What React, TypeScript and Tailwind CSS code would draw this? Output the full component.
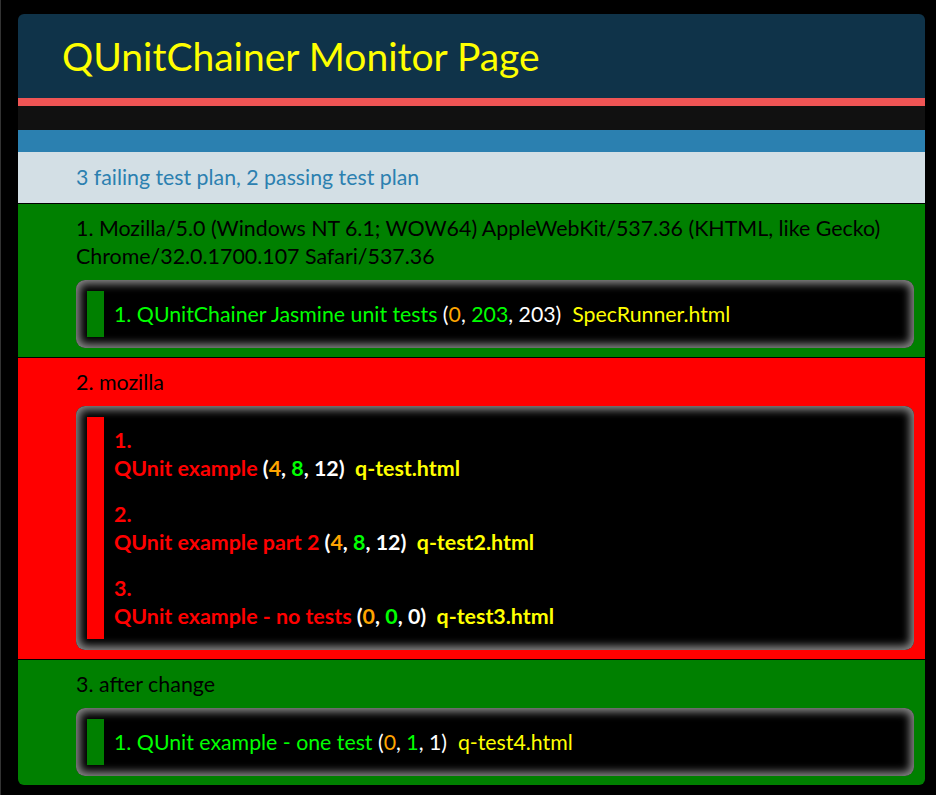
import React from "react";

type Test = { name: string; failed: number; passed: number; total: number; file: string };
type Plan = { title: React.ReactNode; pass: boolean; tests: Test[]; last?: boolean };

const plans: Plan[] = [
  {
    title: (
      <>
        1. Mozilla/5.0 (Windows NT 6.1; WOW64) AppleWebKit/537.36 (KHTML, like Gecko)
        <br />
        Chrome/32.0.1700.107 Safari/537.36
      </>
    ),
    pass: true,
    tests: [{ name: "QUnitChainer Jasmine unit tests", failed: 0, passed: 203, total: 203, file: "SpecRunner.html" }],
  },
  {
    title: "2. mozilla",
    pass: false,
    tests: [
      { name: "QUnit example", failed: 4, passed: 8, total: 12, file: "q-test.html" },
      { name: "QUnit example part 2", failed: 4, passed: 8, total: 12, file: "q-test2.html" },
      { name: "QUnit example - no tests", failed: 0, passed: 0, total: 0, file: "q-test3.html" },
    ],
  },
  {
    title: "3. after change",
    pass: true,
    last: true,
    tests: [{ name: "QUnit example - one test", failed: 0, passed: 1, total: 1, file: "q-test4.html" }],
  },
];

function Counts({ t }: { t: Test }) {
  return (
    <>
      <span className="text-white"> (</span>
      <span className="text-[#ffa500]">{t.failed}</span>
      <span className="text-white">, </span>
      <span className="text-[#00ff00]">{t.passed}</span>
      <span className="text-white">, {t.total})</span>
      <span className="text-[#ffff00] whitespace-pre">{"  " + t.file}</span>
    </>
  );
}

function PlanSection({ p }: { p: Plan }) {
  return (
    <div
      className={`border-t border-black pl-[58px] pr-[11px] pt-[10px] pb-[9px] ${
        p.pass ? "bg-[#008000]" : "bg-[#ff0000]"
      } ${p.last ? "rounded-b-[6px]" : ""}`}
    >
      <div className="text-black text-[21.4px] leading-[28px]">{p.title}</div>
      <div className="mt-[10px] rounded-[9px] bg-black p-[11px] shadow-[inset_0_0_9px_4px_#8a8a8a]">
        <div
          className={`border-l-[17px] pl-[10px] pt-[9px] pb-[9px] ${
            p.pass ? "border-[#008000]" : "border-[#ff0000]"
          }`}
        >
          {p.tests.map((t, i) =>
            p.pass ? (
              <div key={i} className="text-[21.3px] leading-[28px] text-[#00ff00]">
                {i + 1}. {t.name}
                <Counts t={t} />
              </div>
            ) : (
              <div key={i} className={`text-[21.4px] leading-[28px] font-bold text-[#ff0000] ${i > 0 ? "mt-[18px]" : ""}`}>
                {i + 1}.
                <br />
                {t.name}
                <Counts t={t} />
              </div>
            )
          )}
        </div>
      </div>
    </div>
  );
}

export default function App() {
  return (
    <div
      className="min-h-[795px] w-[936px] bg-black pt-[14px] pb-[9px] pl-[17px] border-l border-[#333]"
      style={{ fontFamily: "Lato, 'Noto Sans', sans-serif" }}
    >
      <div className="w-[907px]">
        <div className="h-[84px] rounded-t-[6px] bg-[#0f3349] pl-[44px] flex items-center">
          <h1 className="text-[39px] leading-none text-[#ffff00] font-normal">QUnitChainer Monitor Page</h1>
        </div>
        <div className="h-[8px] bg-[#ef5555]" />
        <div className="h-[24px] bg-[#111111]" />
        <div className="h-[22px] bg-[#2b80b0]" />
        <div className="h-[51px] bg-[#d3dfe5] pl-[58px] flex items-center">
          <span className="text-[21.3px] text-[#2b80b0]">3 failing test plan, 2 passing test plan</span>
        </div>
        {plans.map((p, i) => (
          <PlanSection key={i} p={p} />
        ))}
      </div>
    </div>
  );
}
